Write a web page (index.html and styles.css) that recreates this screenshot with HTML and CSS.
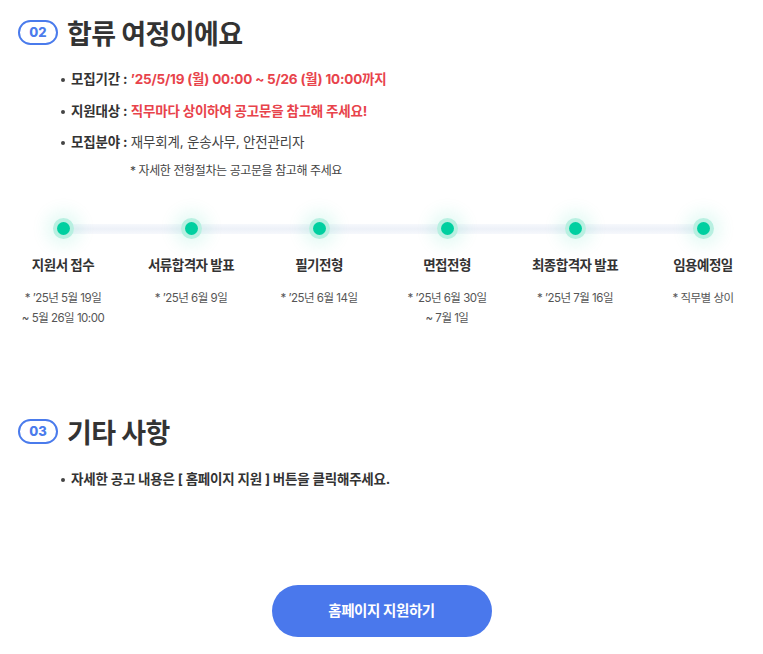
FILE: index.html
```html
<!doctype html>
<html lang="ko">
    <head>
        <meta charset="utf-8">
        <title>채용 안내</title>
        <link rel="stylesheet" href="styles.css">
    </head>
    <body>
        <div id="wrapper">
            <!-- 02 전형 -->
            <div class="section">
                <div class="sec-head">
                    <span class="num">02</span>
                    <h2>합류 여정이에요</h2>
                </div>
                <ul class="info">
                    <li><b>모집기간 :</b> <span class="red">’25/5/19 (월) 00:00 ~ 5/26 (월) 10:00까지</span></li>
                    <li><b>지원대상 :</b> <span class="red">직무마다 상이하여 공고문을 참고해 주세요!</span></li>
                    <li><b>모집분야 :</b> 재무회계, 운송사무, 안전관리자</li>
                </ul>
                <p class="note">* 자세한 전형절차는 공고문을 참고해 주세요</p>
            </div>

            <div class="timeline">
                <div class="step">
                    <div class="dot-row"><span class="dot"></span></div>
                    <p class="step-name">지원서 접수</p>
                    <p class="step-date">* ’25년 5월 19일<br>~ 5월 26일 10:00</p>
                </div>
                <div class="step">
                    <div class="dot-row"><span class="dot"></span></div>
                    <p class="step-name">서류합격자 발표</p>
                    <p class="step-date">* ’25년 6월 9일</p>
                </div>
                <div class="step">
                    <div class="dot-row"><span class="dot"></span></div>
                    <p class="step-name">필기전형</p>
                    <p class="step-date">* ’25년 6월 14일</p>
                </div>
                <div class="step">
                    <div class="dot-row"><span class="dot"></span></div>
                    <p class="step-name">면접전형</p>
                    <p class="step-date">* ’25년 6월 30일<br>~ 7월 1일</p>
                </div>
                <div class="step">
                    <div class="dot-row"><span class="dot"></span></div>
                    <p class="step-name">최종합격자 발표</p>
                    <p class="step-date">* ’25년 7월 16일</p>
                </div>
                <div class="step">
                    <div class="dot-row"><span class="dot"></span></div>
                    <p class="step-name">임용예정일</p>
                    <p class="step-date">* 직무별 상이</p>
                </div>
            </div>

            <!-- 03 기타 -->
            <div class="section sec-etc">
                <div class="sec-head">
                    <span class="num">03</span>
                    <h2>기타 사항</h2>
                </div>
                <ul class="info">
                    <li><b>자세한 공고 내용은 [ 홈페이지 지원 ] 버튼을 클릭해주세요.</b></li>
                </ul>
            </div>

            <div class="btn-box">
                <a class="apply-btn" href="#">홈페이지 지원하기</a>
            </div>
        </div>
    </body>
</html>
```
FILE: styles.css
```css
*{margin:0;padding:0;box-sizing:border-box;}
body{
    background:#fff;
    color:#333;
    font-family:"Inter","Noto Sans CJK KR",sans-serif;
}
#wrapper{
    width:763px;
    overflow:hidden;
}
.section{
    padding:0 18px;
}
.sec-head{
    display:flex;
    align-items:center;
    gap:9px;
    height:40px;
    margin-top:12px;
}
.num{
    width:40px;
    height:25px;
    border:2.5px solid #4a7bec;
    border-radius:20px;
    color:#4a7bec;
    font-size:13px;
    font-weight:800;
    line-height:20px;
    text-align:center;
}
.sec-head h2{
    font-size:27px;
    font-weight:700;
    letter-spacing:-0.6px;
    color:#333;
}
.info{
    list-style:none;
    margin-top:12px;
    padding-left:44px;
}
.info li{
    position:relative;
    padding-left:9px;
    height:31.5px;
    line-height:31.5px;
    font-size:13.5px;
    letter-spacing:-0.2px;
    color:#444;
}
.info li:before{
    content:"";
    position:absolute;
    left:-1px;
    top:14px;
    width:4px;
    height:4px;
    border-radius:50%;
    background:#444;
}
.info b{
    font-weight:700;
    color:#333;
}
.red{
    color:#e8434b;
    font-weight:700;
}
.note{
    margin-top:3px;
    padding-left:112px;
    font-size:12px;
    line-height:18px;
    letter-spacing:-0.4px;
    color:#444;
}
/* 타임라인 */
.timeline{
    display:flex;
    margin-top:38px;
    margin-left:-1px;
    position:relative;
}
.timeline:before{
    content:"";
    position:absolute;
    left:64px;
    top:6px;
    width:640px;
    height:10px;
    background:linear-gradient(#f6f8fc,#edf1f8,#f6f8fc);
}
.step{
    flex:0 0 128px;
    text-align:center;
    position:relative;
}
.dot-row{
    height:22px;
    display:flex;
    align-items:center;
    justify-content:center;
}
.dot{
    width:13px;
    height:13px;
    border-radius:50%;
    background:#00cfa0;
    box-shadow:0 0 0 4px #b8f0e1,0 0 16px 11px rgba(0,207,160,0.1);
}
.step-name{
    margin-top:15px;
    font-size:13.5px;
    font-weight:700;
    line-height:20px;
    letter-spacing:-0.5px;
    color:#333;
}
.step-date{
    margin-top:13px;
    font-size:11.5px;
    line-height:20px;
    letter-spacing:-0.5px;
    color:#555;
}
.sec-etc{
    margin-top:84px;
}
.sec-etc .sec-head{
    margin-top:0;
}
.btn-box{
    display:flex;
    justify-content:center;
    margin-top:90px;
}
.apply-btn{
    display:block;
    width:220px;
    height:52px;
    line-height:52px;
    border-radius:26px;
    background:#4a78ec;
    color:#fff;
    text-align:center;
    text-decoration:none;
    font-size:14.5px;
    font-weight:700;
    letter-spacing:-0.4px;
}
```
